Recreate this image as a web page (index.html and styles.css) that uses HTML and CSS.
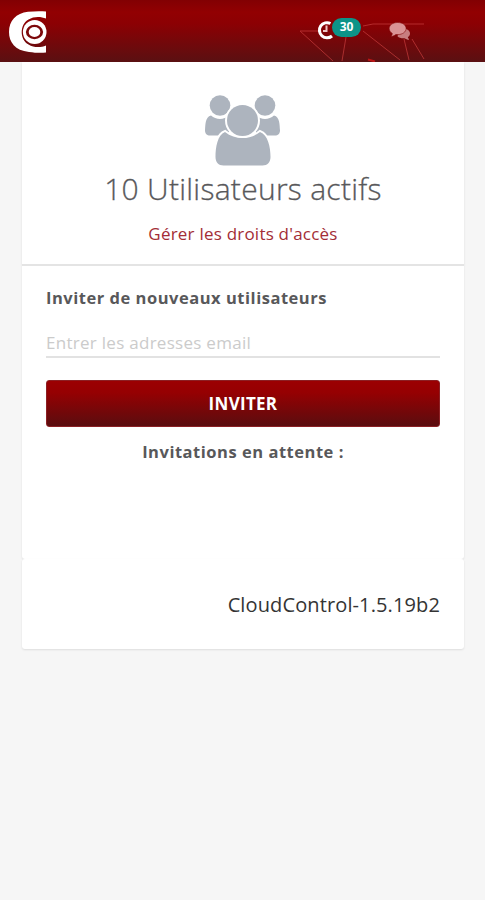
FILE: index.html
```html
<!DOCTYPE html>
<html lang="fr">
<head>
<meta charset="utf-8">
<meta name="viewport" content="width=device-width, initial-scale=1">
<title>CloudControl</title>
<link rel="stylesheet" href="styles.css">
</head>
<body>
<header class="topbar">
  <svg class="network" viewBox="0 0 140 62" aria-hidden="true">
    <path d="M43 61L10 31h22M52 61l4-24M73 26l10-2h51M73 31l37 29M114 39l5 21M122 39l12 20"/>
    <path class="spark" d="M78 59.500l7 2"/>
  </svg>
  <svg class="logo" viewBox="0 0 38 42" aria-hidden="true">
    <path class="crescent" d="M37 .5v7C32 5.500 25 5 19.500 8.500 10.500 13.500 10.500 28.500 19.500 33.500 25 37 32 36.500 37 34.500v7C33 42 27 42 20 41 6 39.500 0 31 0 21 0 10 7 2.200 19 .8 26 0 32 0 37 .5z"/>
    <ellipse class="eye" cx="25.700" cy="21" rx="11.800" ry="12"/>
    <ellipse class="iris" cx="25.500" cy="21" rx="8.600" ry="7.200"/>
    <ellipse class="pupil" cx="25.500" cy="21" rx="5.800" ry="4.900"/>
  </svg>
  <nav class="tools">
    <a class="alerts">
      <svg class="clock" viewBox="0 0 20 20" aria-hidden="true">
        <path class="dial" d="M14.500 3.500A7.600 7.600 0 1 0 16 16"/>
        <path class="hands" d="M10.500 5.500V11H7"/>
      </svg>
      <span class="badge">30</span>
    </a>
    <svg class="chat" viewBox="0 0 22 18" aria-hidden="true">
      <path d="M11 6c6 0 10 2 10 5.500 0 1.800-1 3-2.200 3.700l1.400 2.500c-2 0-3.500-.6-4.700-1.500-3 .2-5.500-.4-7-2z"/>
      <path class="front" d="M8.600.5c5 0 8.500 2.600 8.500 6s-3.500 6.100-8.500 6.100l-1.800-.1C5.500 13.700 3.800 14.300 2 14.300c.8-.8 1.300-1.800 1.300-2.900C1.400 10.300.2 8.500.2 6.500c0-3.400 3.600-6 8.400-6z"/>
    </svg>
  </nav>
</header>
<main class="page">
  <section class="card summary">
    <svg class="users" viewBox="0 0 76 72" aria-hidden="true">
      <circle cx="15" cy="10.500" r="10.300"/>
      <circle cx="60" cy="10.500" r="10.300"/>
      <path d="M6 20.500c5 4.500 13 4.500 18 0v20H5c-3 0-5-2-5-5C.5 30 0 22 6 20.500zM51 20.500c5 4.500 13 4.500 18 0 6 1.500 5.500 9.500 6 15 0 3-2 5-5 5H51z"/>
      <path class="outlined" d="M20 37c10 8 25 8 35 0 8 3 10.500 15 10.500 25 0 5-3 8.500-8 8.500h-39c-5 0-8-3.500-8-8.500 0-10 2-22 9.500-25z"/>
      <circle class="outlined" cx="37.500" cy="25.500" r="15.500"/>
    </svg>
    <h1>10 Utilisateurs actifs</h1>
    <a class="rights">Gérer les droits d'accès</a>
  </section>
  <section class="card invite">
    <h2>Inviter de nouveaux utilisateurs</h2>
    <input type="text" placeholder="Entrer les adresses email" aria-label="Entrer les adresses email">
    <button type="button">INVITER</button>
    <h3>Invitations en attente :</h3>
  </section>
  <footer class="card version"><span>CloudControl-1.5.19b2</span></footer>
</main>
</body>
</html>
```
FILE: styles.css
```css
* { box-sizing: border-box; }
body {
  margin: 0;
  min-height: 100vh;
  background: #f6f6f6;
  color: #58585a;
  font-family: "Open Sans", "Noto Sans", sans-serif;
}
h1, h2, h3 { margin: 0; white-space: nowrap; }
.topbar {
  position: relative;
  display: flex;
  align-items: flex-start;
  justify-content: space-between;
  height: 62px;
  padding: 11px 74px 0 9px;
  background: linear-gradient(#820003 0, #920002 20%, #8c0003 38%, #5a1012 100%);
}
.network {
  position: absolute;
  left: 290px;
  top: 0;
  width: 140px;
  height: 62px;
  fill: none;
  stroke: #c23a3a;
  stroke-width: 1;
  opacity: .75;
}
.spark { stroke: #e01818; stroke-width: 2; }
.logo { width: 38px; height: 42px; }
.crescent, .eye, .pupil { fill: #fff; }
.iris { fill: #7c080a; }
.tools {
  position: relative;
  display: flex;
  align-items: flex-start;
  gap: 28px;
  padding-top: 7px;
}
.alerts { display: flex; }
.clock { width: 20px; height: 20px; margin: 2px 1px 0 -1px; fill: none; stroke: #fff; }
.dial { stroke-width: 3; }
.hands { stroke: #efc5c5; stroke-width: 2; }
.badge {
  width: 29px;
  height: 19px;
  margin-left: -5px;
  border-radius: 10px;
  background: #0d9488;
  color: #fff;
  font-size: 12px;
  font-weight: 700;
  line-height: 18px;
  text-align: center;
}
.chat { width: 22px; height: 18px; margin-top: 4px; fill: #c87d7f; }
.front { fill: #da9496; stroke: #850a0c; stroke-width: .6; }
.page { width: 442px; margin: 0 auto 0 22px; }
.card { background: #fff; box-shadow: 0 1px 2px #ddd; }
.summary {
  display: flex;
  flex-direction: column;
  align-items: center;
  height: 204px;
  padding-top: 33px;
  border-bottom: 2px solid #e4e4e4;
}
.users { width: 76px; height: 72px; fill: #adb4be; }
.outlined { stroke: #fff; stroke-width: 4; paint-order: stroke; }
h1 {
  margin-top: 2px;
  font-size: 30px;
  font-weight: 300;
  line-height: 40px;
  letter-spacing: .28px;
  -webkit-text-stroke: .3px;
}
.rights {
  margin-top: 13px;
  color: #a32d36;
  font-size: 17px;
  line-height: 24px;
  letter-spacing: .22px;
  white-space: nowrap;
}
.invite {
  display: flex;
  flex-direction: column;
  height: 293px;
  padding: 20px 24px 0;
  border-radius: 0 0 3px 3px;
}
h2, h3 { font-size: 16.500px; font-weight: 700; line-height: 24px; letter-spacing: .52px; }
input {
  width: 100%;
  height: 36px;
  margin-top: 12px;
  padding: 7px 0 0;
  border: 0;
  border-bottom: 2px solid #e2e2e2;
  border-radius: 0;
  background: none;
  outline: 0;
  font: 17px "Open Sans", sans-serif;
  letter-spacing: .28px;
}
input::placeholder { color: #cbcbcb; opacity: 1; }
button {
  height: 47px;
  margin-top: 22px;
  padding: 0;
  border: 1px solid #8c2024;
  border-radius: 3px;
  background: linear-gradient(#9b0002 0, #960002 25%, #5a0d0f 100%);
  color: #fff;
  font: 700 17px "Open Sans", sans-serif;
  letter-spacing: .3px;
}
h3 { margin-top: 13px; text-align: center; }
.version {
  display: flex;
  justify-content: flex-end;
  height: 90px;
  padding: 31px 24px 0;
  border-radius: 3px;
  color: #343434;
  font-size: 20px;
  line-height: 30px;
  letter-spacing: .12px;
}
```
